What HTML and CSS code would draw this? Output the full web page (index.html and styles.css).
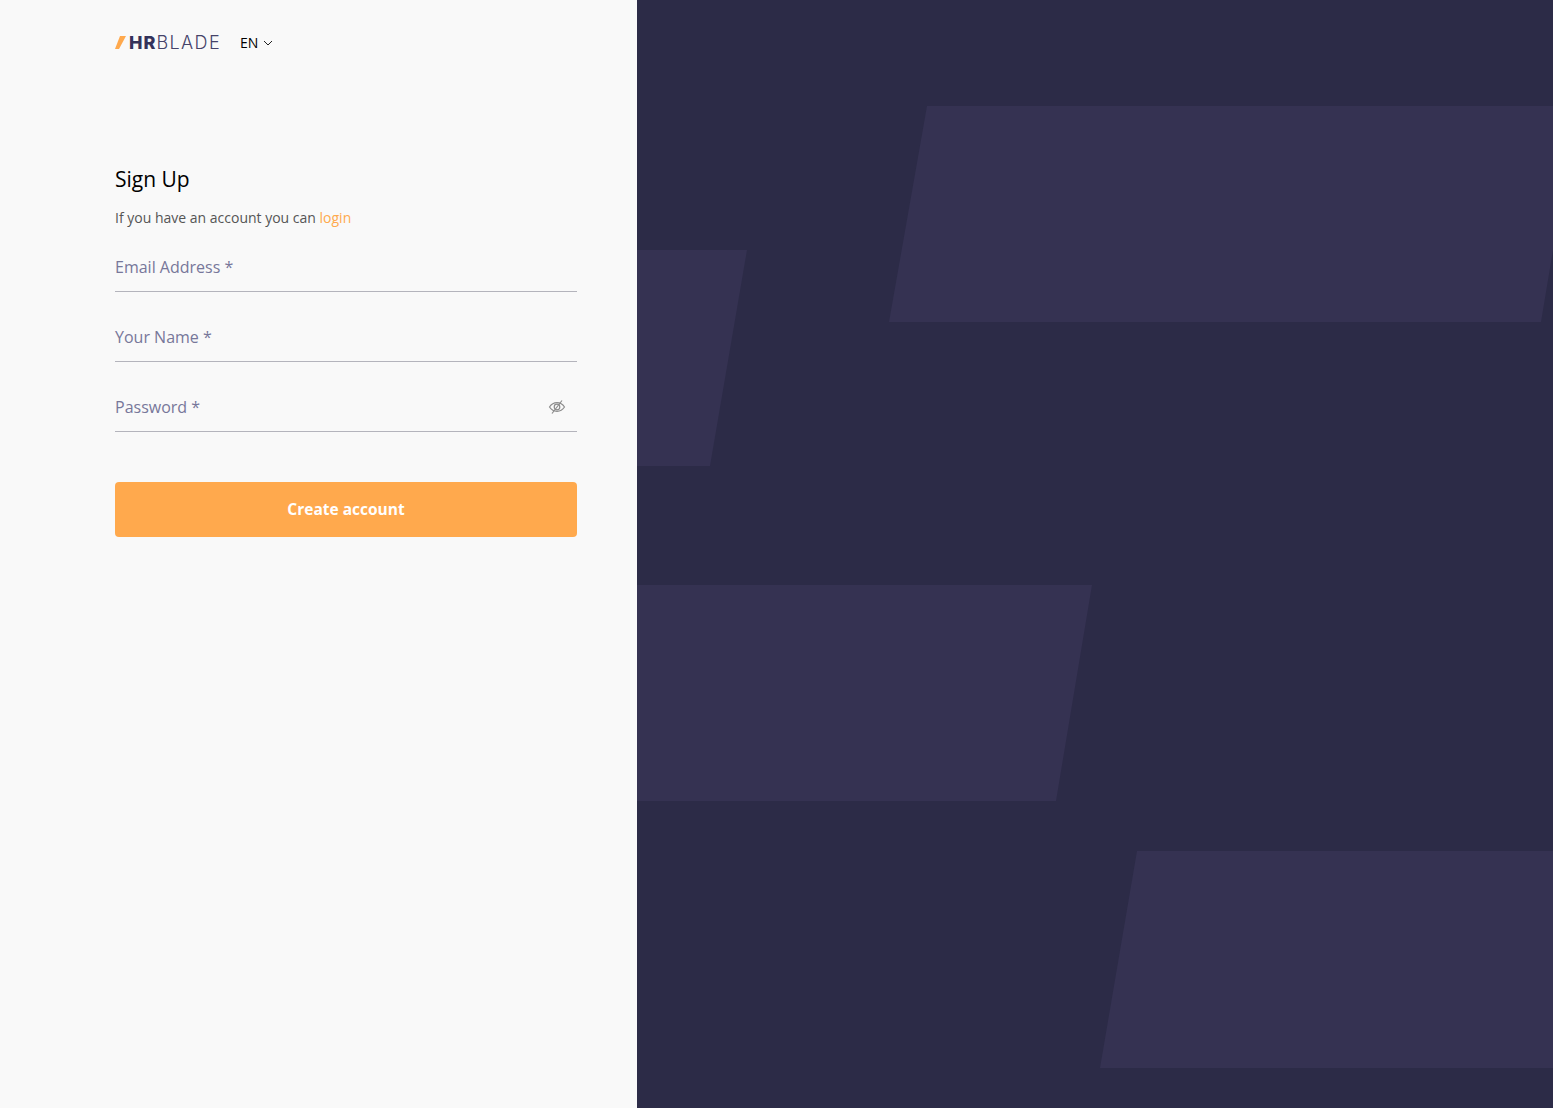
FILE: index.html
```html
<!DOCTYPE html>
<html lang="en">
<head>
    <meta charset="UTF-8">
    <meta name="viewport" content="width=device-width, initial-scale=1.0">
    <title>Sign Up</title>
    <link rel="stylesheet" href="styles.css">
</head>
<body>
    <div class="page">
        <div class="left-side">
            <div class="top-bar">
                <div class="logo">
                    <svg class="logo-mark" width="11" height="13" viewBox="0 0 11 13"><polygon points="5,0 11,0 4,13 0,13" fill="#ffa94d"/></svg>
                    <span class="logo-text"><b>HR</b>BLADE</span>
                </div>
                <div class="lang">
                    <span>EN</span>
                    <svg width="10" height="6" viewBox="0 0 10 6"><path d="M1 1l4 4 4-4" fill="none" stroke="#222" stroke-width="1"/></svg>
                </div>
            </div>

            <h1>Sign Up</h1>
            <p class="sub">If you have an account you can <a href="#" class="login-link">login</a></p>

            <form class="form">
                <div class="field"><span>Email Address *</span></div>
                <div class="field"><span>Your Name *</span></div>
                <div class="field">
                    <span>Password *</span>
                    <svg class="eye" width="18" height="16" viewBox="0 0 18 16">
                        <path d="M1.500 8C3.500 5 6 3.700 9 3.700S14.500 5 16.500 8C14.500 11 12 12.300 9 12.300S3.500 11 1.500 8z" fill="none" stroke="#8c8c8c" stroke-width="1.200"/>
                        <circle cx="9" cy="8" r="2.800" fill="none" stroke="#8c8c8c" stroke-width="1.200"/>
                        <path d="M14 1.500L4 14.500" fill="none" stroke="#8c8c8c" stroke-width="1.200"/>
                    </svg>
                </div>
                <button type="button" class="submit-button">Create account</button>
            </form>
        </div>

        <div class="right-side">
            <svg class="shapes" width="916" height="1108" viewBox="0 0 916 1108">
                <polygon points="290,106 916,106 916,250 904,322 252,322"/>
                <polygon points="0,250 110,250 73,466 0,466"/>
                <polygon points="0,585 455,585 419,801 0,801"/>
                <polygon points="500,851 916,851 916,1068 463,1068"/>
            </svg>
        </div>
    </div>
</body>
</html>
```

FILE: styles.css
```css
body {
    margin: 0;
    font-family: "Open Sans", Arial, sans-serif;
    background-color: #f9f9f9;
}

.page {
    display: flex;
    height: 100vh;
    overflow: hidden;
}

.left-side {
    width: 637px;
    flex-shrink: 0;
    box-sizing: border-box;
    padding: 0 60px 0 115px;
}

.top-bar {
    display: flex;
    align-items: center;
    height: 85px;
}

.logo {
    display: flex;
    align-items: center;
    width: 125px;
}

.logo-mark {
    margin-right: 3px;
}

.logo-text {
    font-family: Inter, sans-serif;
    font-size: 18px;
    font-weight: 300;
    color: #45436a;
    letter-spacing: 1.400px;
}

.logo-text b {
    font-weight: 800;
    color: #34325a;
    letter-spacing: 1px;
}

.lang {
    display: flex;
    align-items: center;
    gap: 5px;
    font-size: 14px;
    color: #000;
}

h1 {
    margin: 0;
    padding-top: 80px;
    font-size: 21px;
    line-height: 28px;
    font-weight: 400;
    color: #000;
}

.sub {
    margin: 15px 0 0;
    font-size: 14px;
    line-height: 20px;
    color: #555;
}

.login-link {
    color: #ffa94d;
    text-decoration: none;
}

.form {
    display: flex;
    flex-direction: column;
    gap: 10px;
    margin-top: 4px;
}

.field {
    display: flex;
    justify-content: space-between;
    align-items: center;
    height: 60px;
    box-sizing: border-box;
    padding: 25px 11px 14px 0;
    border-bottom: 1px solid #b4b4bc;
    font-size: 16px;
    line-height: 22px;
    color: #77779a;
}

.submit-button {
    display: block;
    width: 100%;
    height: 55px;
    margin-top: 40px;
    padding: 0 0 1px;
    border: none;
    border-radius: 4px;
    background-color: #ffa94d;
    color: #ffffff;
    font-family: inherit;
    font-size: 15.500px;
    font-weight: 700;
    cursor: pointer;
}

.right-side {
    flex: 1;
    background-color: #2c2b47;
}

.shapes {
    display: block;
    fill: #353252;
}
```
